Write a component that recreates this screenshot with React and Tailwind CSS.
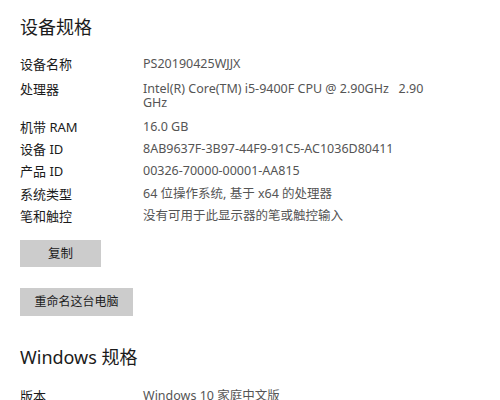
const specs = [
  { label: '设备名称', lines: ['PS20190425WJJX'], mt: 'mt-[19px]' },
  { label: '处理器', lines: ['Intel(R) Core(TM) i5-9400F CPU @ 2.90GHz   2.90', 'GHz'], mt: 'mt-[11px]' },
  { label: '机带 RAM', lines: ['16.0 GB'], mt: 'mt-[10px]' },
  { label: '设备 ID', lines: ['8AB9637F-3B97-44F9-91C5-AC1036D80411'], mt: 'mt-[8px]' },
  { label: '产品 ID', lines: ['00326-70000-00001-AA815'], mt: 'mt-[8px]' },
  { label: '系统类型', lines: ['64 位操作系统, 基于 x64 的处理器'], mt: 'mt-[9px]' },
  { label: '笔和触控', lines: ['没有可用于此显示器的笔或触控输入'], mt: 'mt-[8px]' },
];

function Row({ label, lines, mt }) {
  return (
    <div className={`flex ${mt}`}>
      <div className="w-[123px] shrink-0 text-[#1b1b1b]">{label}</div>
      <div className="text-[12.5px] text-[#555555]">
        {lines.map((l) => (
          <div key={l} className="whitespace-pre">{l}</div>
        ))}
      </div>
    </div>
  );
}

export default function App() {
  return (
    <div
      className="h-[400px] w-[500px] overflow-hidden bg-white pl-[20px] pt-[16px] text-[13px] leading-[14px]"
      style={{ fontFamily: '"Noto Sans", "Noto Sans CJK SC", sans-serif' }}
    >
      <h1 className="text-[18px] leading-[22px] text-[#1b1b1b]">设备规格</h1>

      {specs.map((s) => (
        <Row key={s.label} {...s} />
      ))}

      <button className="mt-[17px] flex h-[27px] w-[81px] items-center justify-center bg-[#cccccc] text-[12.5px] text-[#1b1b1b]">
        复制
      </button>

      <button className="mt-[21px] flex h-[28px] w-[113px] items-center justify-center bg-[#cccccc] text-[12px] text-[#1b1b1b]">
        重命名这台电脑
      </button>

      <h2 className="mt-[30px] text-[18px] leading-[22px] text-[#1b1b1b]">Windows 规格</h2>

      <Row label="版本" lines={['Windows 10 家庭中文版']} mt="mt-[21px]" />
    </div>
  );
}
